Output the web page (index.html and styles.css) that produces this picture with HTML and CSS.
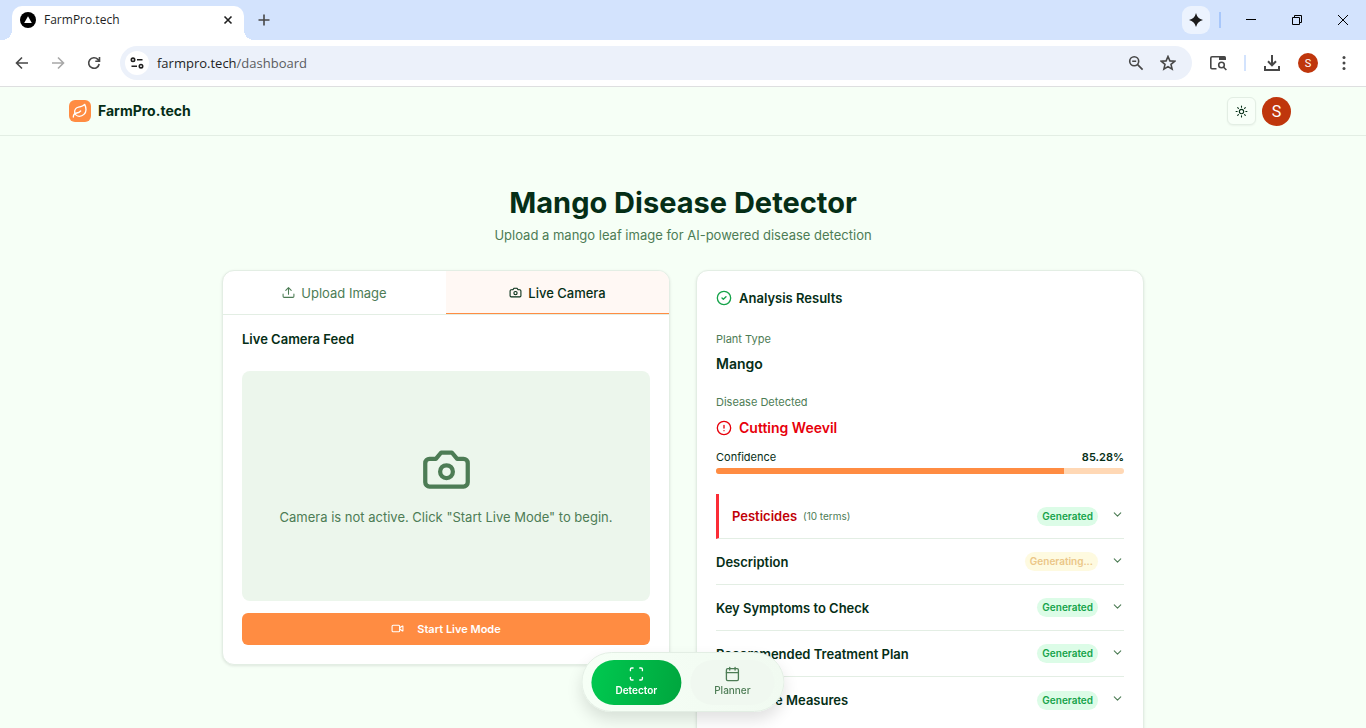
FILE: index.html
```html
<!DOCTYPE html>
<html lang="en">
<head>
<meta charset="utf-8">
<meta name="viewport" content="width=device-width, initial-scale=1">
<title>FarmPro.tech</title>
<link rel="stylesheet" href="styles.css">
</head>
<body>
<svg class="sprite" aria-hidden="true">
  <symbol id="camera" viewBox="0 0 24 24"><path d="M14.5 4h-5L7 7H4a2 2 0 0 0-2 2v9a2 2 0 0 0 2 2h16a2 2 0 0 0 2-2V9a2 2 0 0 0-2-2h-3l-2.5-3z"/><circle cx="12" cy="13" r="3"/></symbol>
  <symbol id="chevron" viewBox="0 0 24 24"><path d="m6 9 6 6 6-6"/></symbol>
</svg>

<div class="browser">
  <div class="tabstrip">
    <div class="tab">
      <svg class="favicon" viewBox="0 0 16 16"><circle cx="8" cy="8" r="8" fill="#000"/><path d="M8 4.2 11.8 11H4.200z" fill="#fff"/></svg>
      <span class="tab-title">FarmPro.tech</span>
      <button class="plain" aria-label="Close tab"><svg width="10" height="10" viewBox="0 0 10 10" class="dark"><path d="m1.500 1.500 7 7m0-7-7 7"/></svg></button>
    </div>
    <button class="plain new-tab" aria-label="New tab"><svg width="12" height="12" viewBox="0 0 12 12" class="grey"><path d="M6 .5v11M.5 6h11"/></svg></button>
    <div class="window-controls">
      <button class="plain spark" aria-label="Assistant"><svg width="14" height="14" viewBox="0 0 14 14"><path d="M7 0q1.300 5.700 7 7-5.700 1.300-7 7-1.300-5.700-7-7 5.700-1.300 7-7z" fill="#1b1b1b"/></svg></button>
      <span class="divider"></span>
      <button class="plain wide" aria-label="Minimize"><svg width="12" height="12" viewBox="0 0 12 12" class="thin"><path d="M1 5.500h10"/></svg></button>
      <button class="plain wide" aria-label="Restore"><svg width="12" height="12" viewBox="0 0 12 12" class="thin"><path d="M1.500 3.500h7v7h-7zM3.500 3.500v-2h7v7h-2"/></svg></button>
      <button class="plain wide" aria-label="Close"><svg width="12" height="12" viewBox="0 0 12 12" class="thin"><path d="m1 1 10 10m0-10L1 11"/></svg></button>
    </div>
  </div>
  <div class="toolbar">
    <button class="plain" aria-label="Back"><svg width="14" height="14" viewBox="0 0 14 14" class="grey"><path d="M13 7H1.800M7 1.500 1.500 7 7 12.500"/></svg></button>
    <button class="plain" aria-label="Forward"><svg width="14" height="14" viewBox="0 0 14 14" class="faint"><path d="M1 7h11.200M7 1.500 12.500 7 7 12.500"/></svg></button>
    <button class="plain" aria-label="Reload"><svg width="14" height="14" viewBox="0 0 14 14" class="grey"><path d="M12.200 8A5.300 5.300 0 1 1 10.900 3.400L12.500 5M12.500 1v4.200H8.300"/></svg></button>
    <div class="address">
      <button class="plain site" aria-label="Site information"><svg width="14" height="12" viewBox="0 0 14 12" class="dark"><circle cx="3" cy="2.800" r="1.700"/><path d="M7 2.800h5.500M1.500 9.200H7"/><circle cx="11" cy="9.200" r="1.700"/></svg></button>
      <span class="url">farmpro.tech<span>/dashboard</span></span>
      <button class="plain" aria-label="Zoom"><svg width="16" height="16" viewBox="0 0 16 16" class="grey"><circle cx="6.200" cy="6.200" r="4.500"/><path d="m9.600 9.600 5 5M4.200 6.200h4"/></svg></button>
      <button class="plain" aria-label="Bookmark"><svg width="16" height="16" viewBox="0 0 16 16" class="grey"><path d="m8 1.500 1.900 4.400 4.700.4-3.600 3.100 1.100 4.700L8 11.600l-4.100 2.500L5 9.400 1.400 6.300l4.700-.4z"/></svg></button>
    </div>
    <div class="tools">
      <button class="plain" aria-label="Search tabs"><svg width="18" height="16" viewBox="0 0 18 16" class="grey"><path d="M7.500 13.800H3a1.200 1.200 0 0 1-1.200-1.200V3A1.200 1.200 0 0 1 3 1.800h7"/><path d="M10 1h5.500A1.500 1.500 0 0 1 17 2.500V5h-7z" class="solid"/><circle cx="12.500" cy="10" r="2.800"/><path d="m14.600 12.200 2.800 2.800"/></svg></button>
      <span class="divider"></span>
      <button class="plain" aria-label="Downloads"><svg width="16" height="16" viewBox="0 0 16 16" class="grey heavy"><path d="M8 0v10M4 6.300l4 4 4-4M1 11v4h14v-4"/></svg></button>
      <button class="plain profile" aria-label="Profile">S</button>
      <button class="plain" aria-label="Menu"><svg width="4" height="16" viewBox="0 0 4 16" fill="#474747"><circle cx="2" cy="2.500" r="1.500"/><circle cx="2" cy="8" r="1.500"/><circle cx="2" cy="13.500" r="1.500"/></svg></button>
    </div>
  </div>
</div>

<div class="page">
  <header class="site-header">
    <div class="header-inner">
      <a class="brand" href="#"><span class="logo"><svg viewBox="0 0 24 24" class="icon"><path d="M11 20A7 7 0 0 1 9.800 6.100C15.500 5 17 4.480 19 2c1 2 2 4.180 2 8 0 5.500-4.780 10-10 10Z"/><path d="M2 21c0-3 1.850-5.360 5.080-6C9.500 14.520 12 13 13 12"/></svg></span>FarmPro.tech</a>
      <div class="header-actions">
        <button class="theme" aria-label="Toggle theme"><svg viewBox="0 0 24 24" class="icon"><circle cx="12" cy="12" r="4"/><path d="M12 2v2M12 20v2M4.930 4.930l1.410 1.410M17.660 17.660l1.410 1.410M2 12h2M20 12h2M6.340 17.660l-1.410 1.410M19.070 4.930l-1.410 1.410"/></svg></button>
        <button class="avatar" aria-label="Account">S</button>
      </div>
    </div>
  </header>

  <main class="content">
    <h1>Mango Disease Detector</h1>
    <p class="lead">Upload a mango leaf image for AI-powered disease detection</p>
    <div class="columns">
      <section class="card">
        <div class="tabs" role="tablist">
          <button role="tab" aria-selected="false"><svg viewBox="0 0 24 24" class="icon"><path d="M12 15V3M7 8l5-5 5 5M2 15v4a2 2 0 0 0 2 2h16a2 2 0 0 0 2-2v-4"/></svg>Upload Image</button>
          <button role="tab" aria-selected="true"><svg class="icon"><use href="#camera"/></svg>Live Camera</button>
        </div>
        <div class="feed">
          <h2>Live Camera Feed</h2>
          <div class="preview">
            <svg class="icon"><use href="#camera"/></svg>
            <p>Camera is not active. Click "Start Live Mode" to begin.</p>
          </div>
          <button class="start"><svg viewBox="0 0 24 24" class="icon"><path d="m16 13 5.223 3.482a.5.5 0 0 0 .777-.416V7.870a.5.5 0 0 0-.752-.432L16 10.500"/><rect x="2" y="6" width="14" height="12" rx="2"/></svg>Start Live Mode</button>
        </div>
      </section>

      <section class="card results">
        <h2><svg viewBox="0 0 24 24" class="icon ok"><circle cx="12" cy="12" r="10"/><path d="m9 12 2 2 4-4"/></svg>Analysis Results</h2>
        <dl>
          <dt>Plant Type</dt>
          <dd>Mango</dd>
          <dt>Disease Detected</dt>
          <dd class="disease"><svg viewBox="0 0 24 24" class="icon"><circle cx="12" cy="12" r="10"/><path d="M12 8v4M12 16h.01"/></svg>Cutting Weevil</dd>
        </dl>
        <div class="confidence"><span>Confidence</span><strong>85.28%</strong></div>
        <div class="meter" role="progressbar" aria-label="Confidence" aria-valuenow="85.28"><div class="fill" style="width:85.28%"></div></div>
        <div class="rows">
          <button class="row alert"><span>Pesticides</span><small>(10 terms)</small><em>Generated</em><svg class="icon"><use href="#chevron"/></svg></button>
          <button class="row"><span>Description</span><em class="pending">Generating...</em><svg class="icon"><use href="#chevron"/></svg></button>
          <button class="row"><span>Key Symptoms to Check</span><em>Generated</em><svg class="icon"><use href="#chevron"/></svg></button>
          <button class="row"><span>Recommended Treatment Plan</span><em>Generated</em><svg class="icon"><use href="#chevron"/></svg></button>
          <button class="row"><span>Preventive Measures</span><em>Generated</em><svg class="icon"><use href="#chevron"/></svg></button>
        </div>
      </section>
    </div>
  </main>
</div>

<nav class="dock" aria-label="Sections">
  <a href="#" class="active" aria-current="page"><svg viewBox="0 0 24 24" class="icon"><path d="M3 7V5a2 2 0 0 1 2-2h2M17 3h2a2 2 0 0 1 2 2v2M21 17v2a2 2 0 0 1-2 2h-2M7 21H5a2 2 0 0 1-2-2v-2"/></svg>Detector</a>
  <a href="#"><svg viewBox="0 0 24 24" class="icon"><path d="M8 2v4M16 2v4M3 10h18"/><rect x="3" y="4" width="18" height="18" rx="2"/></svg>Planner</a>
</nav>
</body>
</html>
```

FILE: styles.css
```css
* { box-sizing: border-box; }

body {
  margin: 0;
  height: 100vh;
  display: flex;
  flex-direction: column;
  font-family: Inter, "Liberation Sans", sans-serif;
  font-size: 13px;
  line-height: 20px;
  color: #052e16;
  background: #f6fff6;
}

h1, h2, p, dl, dd { margin: 0; }
button { font: inherit; color: inherit; cursor: pointer; }
a { color: inherit; text-decoration: none; }

.sprite { position: absolute; width: 0; height: 0; }

.icon {
  flex: none;
  width: 13px;
  height: 13px;
  fill: none;
  stroke: currentColor;
  stroke-width: 2;
  stroke-linecap: round;
  stroke-linejoin: round;
}

/* Browser frame */
.browser {
  flex: none;
  font-family: "Open Sans", "Noto Sans", sans-serif;
  color: #1f1f1f;
}

.plain {
  display: grid;
  place-items: center;
  flex: none;
  width: 28px;
  height: 28px;
  padding: 0;
  border: 0;
  background: none;
}

.dark, .grey, .faint, .thin { fill: none; stroke: #1f1f1f; stroke-width: 1.6; }
.grey { stroke: #474747; }
.faint { stroke: #a8a8a8; }
.thin { stroke: #000; stroke-width: 1; }
.heavy { stroke-width: 2; }
.solid { fill: #474747; stroke: none; }

.tabstrip {
  display: flex;
  align-items: center;
  height: 40px;
  padding-left: 12px;
  background: #d3e3fd;
}

.tab {
  position: relative;
  align-self: flex-end;
  display: flex;
  align-items: center;
  gap: 8px;
  width: 232px;
  height: 34px;
  padding: 0 2px 6px 8px;
  border-radius: 10px 10px 0 0;
  background: #fff;
}

.tab::before, .tab::after {
  content: "";
  position: absolute;
  bottom: 0;
  width: 10px;
  height: 10px;
}

.tab::before { right: 100%; background: radial-gradient(circle at 0 0, #d3e3fd 10px, #fff 10px); }
.tab::after { left: 100%; background: radial-gradient(circle at 100% 0, #d3e3fd 10px, #fff 10px); }

.favicon { width: 16px; height: 16px; }
.tab-title { flex: 1; font-size: 12px; }
.new-tab { margin-left: 6px; }

.window-controls {
  display: flex;
  align-items: center;
  margin-left: auto;
}

.spark { border-radius: 9px; background: #ecf3fe; }

.divider {
  width: 2px;
  height: 16px;
  margin-left: 9px;
  background: #a8c7fa;
}

.wide { width: 46px; }
.divider + .wide { margin-left: 7px; }

.toolbar {
  display: flex;
  align-items: center;
  gap: 8px;
  height: 47px;
  padding: 0 8px;
  border-bottom: 1px solid #dedfe0;
  background: #fff;
}

.address {
  flex: 1;
  display: flex;
  align-items: center;
  gap: 4px;
  height: 34px;
  padding: 0 10px 0 5px;
  margin-left: 4px;
  border-radius: 17px;
  background: #ecf1fa;
}

.site {
  width: 24px;
  height: 24px;
  border-radius: 50%;
  background: #fff;
}

.url { flex: 1; margin-left: 4px; font-size: 13px; }
.url span { color: #5a5c60; }

.tools { display: flex; align-items: center; gap: 8px; margin-left: 4px; }
.tools .divider { margin: 0 4px; background: #d3e3fd; }

.profile {
  width: 20px;
  height: 20px;
  margin: 0 4px;
  border-radius: 50%;
  font: 11px Roboto, sans-serif;
  color: #fff;
  background: #bf360c;
}

/* Site header */
.page {
  flex: 1;
  min-height: 0;
  overflow-y: auto;
  scrollbar-width: none;
}

.site-header { border-bottom: 1px solid #e3eee4; }

.header-inner {
  display: flex;
  align-items: center;
  justify-content: space-between;
  max-width: 1228px;
  height: 48px;
  margin: 0 auto;
  padding-right: 6px;
}

.brand {
  display: flex;
  align-items: center;
  gap: 7px;
  font-size: 14px;
  font-weight: 700;
}

.logo {
  display: grid;
  place-items: center;
  width: 22px;
  height: 22px;
  border-radius: 6px;
  color: #fff;
  background: #ff8c42;
}

.logo .icon { width: 16px; height: 16px; }

.header-actions { display: flex; align-items: center; gap: 6px; }

.theme {
  display: grid;
  place-items: center;
  width: 29px;
  height: 28px;
  padding: 0;
  border: 1px solid #e3eee4;
  border-radius: 6px;
  background: #f8fff8;
  box-shadow: 0 1px 2px #0000000d;
}

.avatar {
  width: 29px;
  height: 29px;
  padding: 0;
  border: 0;
  border-radius: 50%;
  font: 16px Roboto, sans-serif;
  color: #fff;
  background: #bf360c;
}

/* Detector */
.content {
  max-width: 954px;
  margin: 0 auto;
  padding: 51px 16px 96px;
}

h1 {
  font-size: 29px;
  line-height: 32px;
  font-weight: 700;
  text-align: center;
}

.lead {
  margin: 6px 0 25px;
  text-align: center;
  color: #4d7c55;
}

.columns {
  display: grid;
  grid-template-columns: 1fr 1fr;
  align-items: start;
  gap: 26px;
}

.card {
  overflow: hidden;
  border: 1px solid #e3eee4;
  border-radius: 12px;
  background: #fff;
  box-shadow: 0 1px 3px #0000001a;
}

h2 { font-size: 13px; line-height: 20px; font-weight: 600; }

.tabs {
  display: grid;
  grid-template-columns: 1fr 1fr;
  border-bottom: 1px solid #e3eee4;
}

.tabs button {
  display: flex;
  align-items: center;
  justify-content: center;
  gap: 6px;
  height: 43px;
  padding: 0;
  border: 0;
  color: #4d7c55;
  background: none;
}

.tabs [aria-selected="true"] {
  font-weight: 500;
  color: #052e16;
  background: #fff8f4;
  box-shadow: inset 0 -1px #ff8c42;
}

.feed { padding: 14px 19px 19px; }

.preview {
  display: flex;
  flex-direction: column;
  align-items: center;
  justify-content: center;
  gap: 12px;
  aspect-ratio: 16 / 9;
  margin: 22px 0 12px;
  border-radius: 8px;
  color: #4d7c55;
  background: #ecf6ec;
}

.preview .icon { width: 51px; height: 51px; }

.start {
  display: flex;
  align-items: center;
  justify-content: center;
  gap: 13px;
  width: 100%;
  height: 32px;
  border: 0;
  border-radius: 6px;
  font-size: 11px;
  font-weight: 600;
  color: #fff;
  background: #ff8c42;
}

/* Results */
.results { padding: 17px 19px 19px; }

.results h2 {
  display: flex;
  align-items: center;
  gap: 7px;
}

.results h2 .icon, .disease .icon { width: 16px; height: 16px; }
.ok { color: #16a34a; }

dl { margin-top: 23px; }

dt {
  font-size: 11px;
  line-height: 16px;
  color: #4d7c55;
}

dd {
  display: flex;
  align-items: center;
  gap: 7px;
  margin: 6px 0 19px;
  font-size: 14px;
  line-height: 22px;
  font-weight: 600;
}

.disease { margin: 7px 0 10px; color: #e7000b; }

.confidence {
  display: flex;
  justify-content: space-between;
  font-size: 11px;
  line-height: 16px;
}

.confidence strong { font-weight: 600; }

.meter {
  height: 6px;
  margin: 3px 0 20px;
  overflow: hidden;
  border-radius: 3px;
  background: #ffd8b5;
}

.fill { height: 100%; background: #ff8c42; }

.row {
  display: flex;
  align-items: center;
  width: 100%;
  height: 46px;
  padding: 0;
  border: 0;
  border-bottom: 1px solid #e3eee4;
  font-weight: 600;
  text-align: left;
  background: none;
}

.row:last-child { border-bottom: 0; }

.row em {
  margin-left: auto;
  padding: 2px 5px;
  border-radius: 10px;
  font-size: 10px;
  line-height: 15px;
  font-style: normal;
  color: #16a34a;
  background: #dcfce7;
}

.row .pending { color: #ebc687; background: #fefae0; }

.row .icon {
  margin: 0 0 3px 13px;
  color: #4d7c55;
}

.alert {
  height: 45px;
  padding-left: 13px;
  border-left: 3px solid #fb2c36;
}

.alert span { color: #c10007; }

.alert small {
  margin-left: 6px;
  font-size: 10px;
  font-weight: 400;
  color: #4d7c55;
}

/* Floating navigation */
.dock {
  position: fixed;
  bottom: 16px;
  left: 50%;
  display: flex;
  gap: 9px;
  padding: 7px 9px 6px;
  border: 1px solid #e3eee4;
  border-radius: 30px;
  background: linear-gradient(90deg, #f6fff6, #f1faf1);
  box-shadow: 0 8px 16px #0000001f;
  transform: translateX(-50%);
}

.dock a {
  display: flex;
  flex-direction: column;
  align-items: center;
  justify-content: center;
  gap: 1px;
  height: 45px;
  padding: 0 24px 2px;
  border-radius: 23px;
  font-size: 10px;
  line-height: 14px;
  font-weight: 500;
  color: #4d7c55;
  background: #f0f8f0;
}

.dock .icon { width: 16px; height: 16px; }

.dock .active {
  font-weight: 600;
  color: #fff;
  background: linear-gradient(100deg, #00c950, #00a63e);
}
```
